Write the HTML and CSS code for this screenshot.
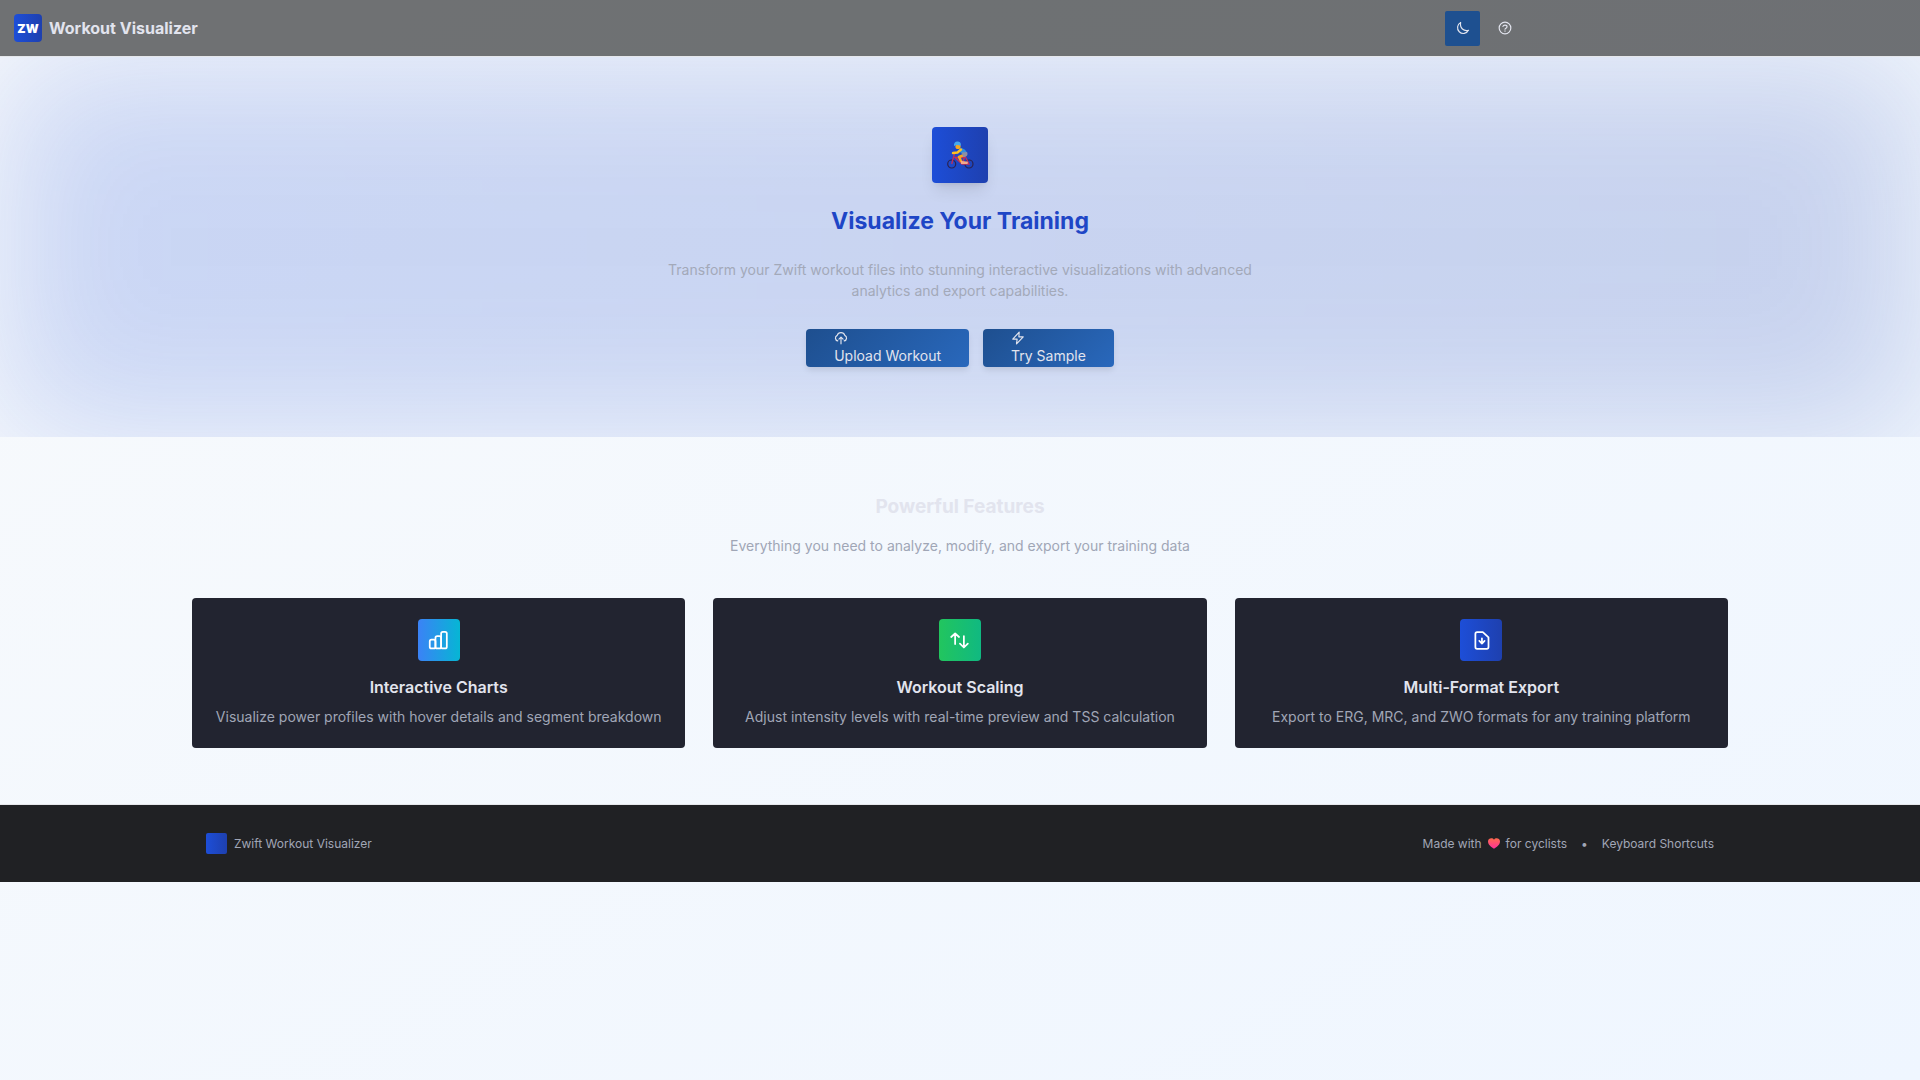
FILE: index.html
```html
<!DOCTYPE html>
<html lang="en">
<head>
  <meta charset="utf-8">
  <meta name="viewport" content="width=device-width, initial-scale=1">
  <title>Workout Visualizer</title>
  <link rel="stylesheet" href="styles.css">
</head>
<body>
  <header class="site-header">
    <div class="header-inner">
      <div class="brand">
        <span class="brand-mark">ZW</span>
        <span class="brand-name">Workout Visualizer</span>
      </div>
      <div class="header-actions">
        <button class="icon-button icon-button-active" type="button" aria-label="Toggle dark mode">
          <svg class="icon" viewBox="0 0 24 24"><path d="M8 2.500a10 10 0 1 0 13.500 13.500c-8 2.500-15.500-4-13.500-13.500z"/></svg>
        </button>
        <button class="icon-button" type="button" aria-label="Help">
          <svg class="icon" viewBox="0 0 24 24"><circle cx="12" cy="12" r="10"/><path d="M8.500 9.200C9 7.600 10.400 7 12 7c2 0 3.500 1.100 3.500 2.900 0 2.400-3.500 2.300-3.500 4.300M12 17v.6"/></svg>
        </button>
      </div>
    </div>
  </header>

  <main>
    <section class="hero">
      <div class="hero-glow"></div>
      <div class="hero-content">
        <div class="hero-mark">
          <svg class="cyclist" viewBox="0 0 28 28" role="img" aria-label="Cyclist">
            <g fill="none" stroke="#2b2250" stroke-width="1.200"><circle cx="5.700" cy="23" r="4"/><circle cx="23" cy="23" r="4"/></g>
            <path d="M5.700 23 8.500 12.500M8.500 16 16 23h7l-4-8-3 8M9 16.500h10" fill="none" stroke="#c22f5a" stroke-width="1.300"/>
            <path d="M18 14l-5 2 2.500 5" fill="none" stroke="#f5a623" stroke-width="2.600" stroke-linejoin="round"/>
            <path d="M15 20l6 .5c1.500.5 1 2.500 0 2.500h-6z" fill="#f5a98a"/>
            <path d="M14 7.500c3-1 6.500 2 7 5l-4.500 1-2.500-2.500z" fill="#2f8fe0"/>
            <path d="M16 11.500l5-.5c1.500 3-.5 5-4 5z" fill="#8f8fa3"/>
            <path d="M15 8.500l-3.500 3L7 12" fill="none" stroke="#ffc21f" stroke-width="2.400" stroke-linecap="round" stroke-linejoin="round"/>
            <circle cx="12" cy="5.500" r="2.600" fill="#f5a623"/>
            <path d="M8 5c-.5-3 1.500-5 4-4.500 2.500.3 3.500 2.500 2.500 4.500-2-1.500-4-1-6.500 0z" fill="#45a9ef"/>
          </svg>
        </div>
        <h1 class="hero-title">Visualize Your Training</h1>
        <p class="hero-text">Transform your Zwift workout files into stunning interactive visualizations with advanced analytics and export capabilities.</p>
        <div class="hero-actions">
          <button class="button" type="button">
            <svg class="icon" viewBox="0 0 24 24"><path d="M6.500 17A5 5 0 0 1 5.500 7.500a6.800 6.800 0 0 1 13 0A5 5 0 0 1 17.500 17M12 22V11M8.500 14 12 10.500l3.500 3.500"/></svg>
            Upload Workout
          </button>
          <button class="button" type="button">
            <svg class="icon" viewBox="0 0 24 24"><path d="M14 2 3 14h7.500L9.500 22 21 10h-7.500z"/></svg>
            Try Sample
          </button>
        </div>
      </div>
    </section>

    <section class="features">
      <h2 class="features-title">Powerful Features</h2>
      <p class="features-text">Everything you need to analyze, modify, and export your training data</p>
      <div class="card-grid">
        <article class="card">
          <div class="card-icon card-icon-charts">
            <svg class="icon-large" viewBox="0 0 24 24"><rect x="2" y="11" width="6.500" height="10" rx="2"/><rect x="8.500" y="7" width="6.500" height="14" rx="2"/><rect x="15" y="2" width="6.500" height="19" rx="2"/></svg>
          </div>
          <h3 class="card-title">Interactive Charts</h3>
          <p class="card-text">Visualize power profiles with hover details and segment breakdown</p>
        </article>
        <article class="card">
          <div class="card-icon card-icon-scaling">
            <svg class="icon-large" viewBox="0 0 24 24"><path d="M7 16V4M2.500 8 7 4l4.500 4M17 7v12.500M12.500 15.500 17 20l4.500-4.500"/></svg>
          </div>
          <h3 class="card-title">Workout Scaling</h3>
          <p class="card-text">Adjust intensity levels with real-time preview and TSS calculation</p>
        </article>
        <article class="card">
          <div class="card-icon card-icon-export">
            <svg class="icon-large" viewBox="0 0 24 24"><path d="M12.500 9.500v6M9.500 12.500l3 3 3-3M18 21.500H7a2 2 0 0 1-2-2v-15a2 2 0 0 1 2-2h6.500L20 8.500v11a2 2 0 0 1-2 2z"/></svg>
          </div>
          <h3 class="card-title">Multi-Format Export</h3>
          <p class="card-text">Export to ERG, MRC, and ZWO formats for any training platform</p>
        </article>
      </div>
    </section>
  </main>

  <footer class="site-footer">
    <div class="footer-inner">
      <div class="footer-brand">
        <span class="footer-mark"></span>
        <span>Zwift Workout Visualizer</span>
      </div>
      <div class="footer-links">
        <span class="footer-credit">
          Made with
          <svg class="heart" viewBox="0 0 12 11" role="img" aria-label="love">
            <defs><linearGradient id="heart-fill" x1="0" y1="0" x2="0" y2="1"><stop offset="0" stop-color="#ff6a4d"/><stop offset="1" stop-color="#ff2f9c"/></linearGradient></defs>
            <path d="M6 10.800C3 9 0 6.500 0 3.500 0 0 4.500-.8 6 1.700 7.500-.8 12 0 12 3.500c0 3-3 5.500-6 7.300z" fill="url(#heart-fill)"/>
          </svg>
          for cyclists
        </span>
        <span>•</span>
        <button class="footer-button" type="button">Keyboard Shortcuts</button>
      </div>
    </div>
  </footer>
</body>
</html>
```
FILE: styles.css
```css
*, *::before, *::after {
  box-sizing: border-box;
  margin: 0;
}

html {
  min-height: 100%;
}

body {
  min-height: 100vh;
  background: linear-gradient(to bottom right, #f8fafc, #eff6ff);
  color: #e2e4ee;
  font-family: Inter, "Liberation Sans", sans-serif;
  font-size: 14px;
  line-height: 21px;
}

button {
  border: 0;
  color: inherit;
  font: inherit;
  cursor: pointer;
}

.icon,
.icon-large {
  display: block;
  fill: none;
  stroke: currentColor;
  stroke-width: 2;
  stroke-linecap: round;
  stroke-linejoin: round;
}

.icon {
  width: 14px;
  height: 14px;
}

.icon-large {
  width: 21px;
  height: 21px;
}

/* Header */

.site-header {
  border-bottom: 1px solid #e5e7eb;
  background: rgba(20, 21, 24, 0.6);
}

.header-inner {
  display: flex;
  align-items: center;
  justify-content: space-between;
  max-width: 1536px;
  height: 56px;
  padding: 0 14px;
}

.brand {
  display: flex;
  align-items: center;
  gap: 7px;
}

.brand-mark {
  display: grid;
  place-items: center;
  width: 28px;
  height: 28px;
  border-radius: 4px;
  background: linear-gradient(to right, #1d4ed8, #1e40af);
  color: #fff;
  font-size: 12px;
  font-weight: 900;
}

.brand-name {
  font-size: 16px;
  font-weight: 700;
}

.header-actions {
  display: flex;
  gap: 7px;
}

.icon-button {
  display: grid;
  place-items: center;
  width: 35px;
  height: 35px;
  padding: 0;
  border-radius: 2px;
  background: transparent;
}

.icon-button-active {
  background: #1e5090;
}

/* Hero */

.hero {
  position: relative;
  overflow: hidden;
  padding: 70px 14px;
}

.hero-glow {
  position: absolute;
  inset: 0;
  background: linear-gradient(to right, #1d4ed8, #1e40af);
  filter: blur(72px);
  opacity: 0.2;
}

.hero-content {
  position: relative;
  display: flex;
  flex-direction: column;
  align-items: center;
  text-align: center;
}

.hero-mark {
  display: grid;
  place-items: center;
  width: 56px;
  height: 56px;
  margin-bottom: 21px;
  border-radius: 4px;
  background: linear-gradient(to right, #1d4ed8, #1e40af);
  box-shadow: 0 10px 15px -3px rgba(0, 0, 0, 0.1), 0 4px 6px -4px rgba(0, 0, 0, 0.1);
}

.cyclist {
  display: block;
  width: 28px;
  height: 28px;
}

.hero-title {
  margin-bottom: 21px;
  color: #1e46c6;
  font-size: 23px;
  font-weight: 700;
  line-height: 34px;
}

.hero-text {
  max-width: 588px;
  margin-bottom: 28px;
  color: #a3a9b9;
}

.hero-actions {
  display: flex;
  flex-wrap: wrap;
  justify-content: center;
  gap: 14px;
}

.button {
  height: 38px;
  padding: 0 28px;
  border-radius: 4px;
  background: linear-gradient(135deg, #1e4f8f, #2968bc);
  box-shadow: 0 4px 6px -1px rgba(0, 0, 0, 0.1);
  text-align: left;
}

/* Features */

.features {
  max-width: 1536px;
  margin: 0 auto;
  padding: 56px 0;
}

.features-title {
  margin-bottom: 14px;
  font-size: 19px;
  font-weight: 700;
  line-height: 28px;
  text-align: center;
}

.features-text {
  margin-bottom: 42px;
  color: #a0a6b6;
  text-align: center;
}

.card-grid {
  display: grid;
  grid-template-columns: repeat(auto-fit, minmax(300px, 1fr));
  gap: 28px;
}

.card {
  padding: 21px;
  border-radius: 4px;
  background: #222430;
  text-align: center;
}

.card-icon {
  display: grid;
  place-items: center;
  width: 42px;
  height: 42px;
  margin: 0 auto 14px;
  border-radius: 4px;
  color: #fff;
}

.card-icon-charts {
  background: linear-gradient(to right, #3b82f6, #06b6d4);
}

.card-icon-scaling {
  background: linear-gradient(to right, #22c55e, #10b981);
}

.card-icon-export {
  background: linear-gradient(to right, #1d4ed8, #1e40af);
}

.card-title {
  margin-bottom: 7px;
  font-size: 16px;
  font-weight: 600;
  line-height: 24px;
}

.card-text {
  color: #a0a6b6;
}

/* Footer */

.site-footer {
  border-top: 1px solid #e5e7eb;
  background: #202124;
  color: #a0a6b6;
  font-size: 12px;
}

.footer-inner {
  display: flex;
  flex-wrap: wrap;
  align-items: center;
  justify-content: space-between;
  gap: 14px;
  max-width: 1536px;
  margin: 0 auto;
  padding: 28px 14px;
}

.footer-brand {
  display: flex;
  align-items: center;
  gap: 7px;
}

.footer-mark {
  width: 21px;
  height: 21px;
  border-radius: 2px;
  background: linear-gradient(to right, #1d4ed8, #1e40af);
}

.footer-links {
  display: flex;
  align-items: center;
  gap: 14px;
}

.footer-credit {
  display: flex;
  align-items: center;
  gap: 6px;
}

.heart {
  width: 12px;
  height: 11px;
}

.footer-button {
  padding: 0;
  background: none;
}
```
